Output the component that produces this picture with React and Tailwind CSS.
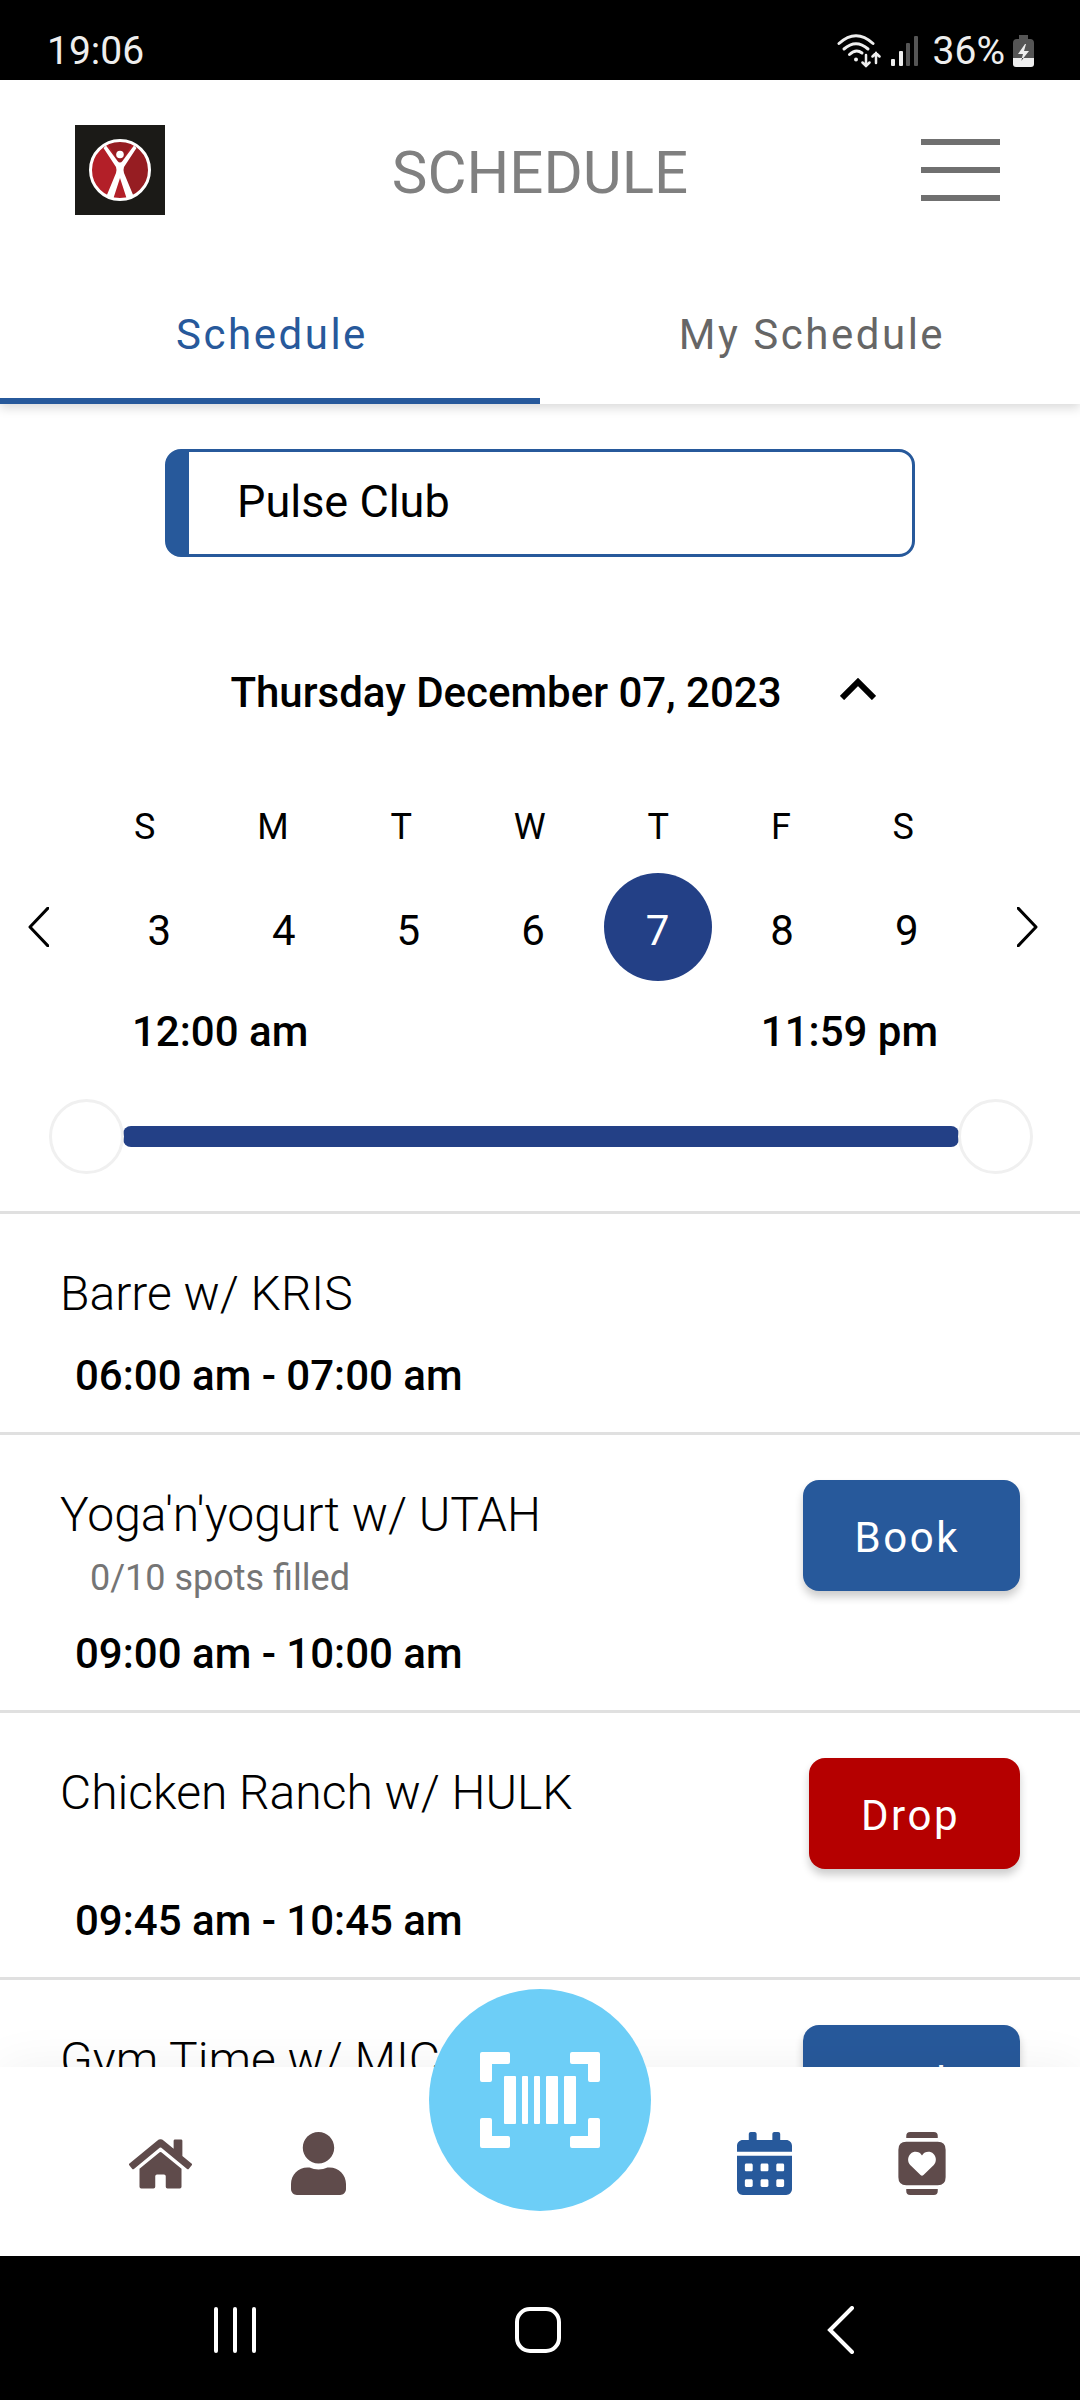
import { useState } from "react";
import { FaHome, FaUser, FaCalendarAlt } from "react-icons/fa";

const WEEKDAYS = ["S", "M", "T", "W", "T", "F", "S"];
const DAYS = [3, 4, 5, 6, 7, 8, 9];
const CLASSES = [
  { title: "Barre w/ KRIS", time: "06:00 am - 07:00 am" },
  {
    title: "Yoga'n'yogurt w/ UTAH",
    spots: "0/10 spots filled",
    time: "09:00 am - 10:00 am",
    action: "Book",
  },
  { title: "Chicken Ranch w/ HULK", time: "09:45 am - 10:45 am", action: "Drop" },
  { title: "Gym Time w/ MIC", action: "Book" },
];

function WifiIcon() {
  return (
    <svg className="h-[34px] w-[44px]" viewBox="0 0 44 34" fill="none" stroke="#eee" strokeLinecap="round" aria-hidden="true">
      <path d="M2 9.500Q19 -6 36 9.500" strokeWidth="3" />
      <path d="M7 15Q19 4.500 31 15" strokeWidth="3" />
      <path d="M12.500 20.500Q19 14.500 25 19" strokeWidth="3" />
      <circle cx="19" cy="25.500" r="2" fill="#eee" stroke="none" />
      <path d="M29 21v11M25.500 28.500l3.500 3.500l3.500 -3.500M39 29v-10M35.500 22.500l3.500 -3.500l3.500 3.500" strokeWidth="2.500" />
    </svg>
  );
}

function SignalIcon() {
  return (
    <svg className="h-[30px] w-[28px]" viewBox="0 0 28 30" aria-hidden="true">
      <rect x="0" y="23" width="4" height="7" rx="1" fill="#eee" />
      <rect x="8" y="15" width="4" height="15" rx="1" fill="#eee" />
      <rect x="15" y="7" width="4" height="23" rx="1" fill="#555" />
      <rect x="23" y="0" width="4" height="30" rx="1" fill="#555" />
    </svg>
  );
}

function BatteryIcon() {
  return (
    <svg className="h-[32px] w-[21px]" viewBox="0 0 21 32" aria-hidden="true">
      <path d="M6 0h9v4h2q4 0 4 4v15H0V8q0-4 4-4h2z" fill="#555" />
      <path d="M0 23h21v6q0 3-3 3H3q-3 0-3-3z" fill="#eee" />
      <path d="M12 9l-7 10h5l-2 7l8-10h-5l2-7z" fill="#eee" />
      <path d="M9.500 23l-1.500 3l2.500-3z" fill="#000" />
    </svg>
  );
}

function Logo() {
  return (
    <svg className="size-[90px]" viewBox="0 0 90 90" role="img" aria-label="Pulse Club">
      <rect width="90" height="90" fill="#1b1a17" />
      <circle cx="45" cy="45" r="29.500" fill="#b31f28" />
      <path d="M60 20L45 44L58 72A29.500 29.500 0 0 0 60 20z" fill="#961d22" />
      <path d="M33 19L45 40L57 19Q45 13 33 19z" fill="#961d22" />
      <circle cx="45" cy="45" r="29.500" fill="none" stroke="#fff" strokeWidth="3" />
      <path
        d="M28.500 23L31 20.500L42.500 36Q45 39 47.500 36L59 20.500L61.500 23L49 42Q48 45 49 48L58.500 71L51.500 73L45 53L38.500 73L31.500 71L41 48Q42 45 41 42z"
        fill="#fff"
      />
      <circle cx="45" cy="29.500" r="3.800" fill="#fff" />
    </svg>
  );
}

function MenuIcon() {
  return (
    <svg className="h-[62px] w-20" viewBox="0 0 80 62" stroke="#707070" strokeWidth="6" aria-hidden="true">
      <path d="M1 3h79M1 31h79M1 59h79" />
    </svg>
  );
}

function BarcodeIcon() {
  return (
    <svg className="h-24 w-[120px]" viewBox="0 0 120 96" fill="#fff" aria-hidden="true">
      <path d="M2 0h26q2 0 2 2v8q0 2-2 2H12v16q0 2-2 2H2q-2 0-2-2V2q0-2 2-2z" />
      <path d="M118 0H92q-2 0-2 2v8q0 2 2 2h16v16q0 2 2 2h8q2 0 2-2V2q0-2-2-2z" />
      <path d="M2 96h26q2 0 2-2v-8q0-2-2-2H12V68q0-2-2-2H2q-2 0-2 2v26q0 2 2 2z" />
      <path d="M118 96H92q-2 0-2-2v-8q0-2 2-2h16V68q0-2 2-2h8q2 0 2 2v26q0 2-2 2z" />
      <rect x="24" y="24" width="12" height="48" rx="1" />
      <rect x="42" y="24" width="6" height="48" rx="1" />
      <rect x="54" y="24" width="6" height="48" rx="1" />
      <rect x="66" y="24" width="12" height="48" rx="1" />
      <rect x="84" y="24" width="12" height="48" rx="1" />
    </svg>
  );
}

function WatchIcon() {
  return (
    <svg className="h-[63px] w-12" viewBox="0 0 384 512" fill="currentColor" aria-hidden="true">
      <path d="M64 48V32Q64 0 96 0h192q32 0 32 32v16zM64 464v16q0 32 32 32h192q32 0 32-32v-16z" />
      <path
        fillRule="evenodd"
        d="M64 80h256q64 0 64 64v224q0 64-64 64H64q-64 0-64-64V144q0-64 64-64zM192 190c-22-36-68-36-92-14c-28 26-26 68-4 92l84 82q12 12 24 0l84-82c22-24 24-66-4-92c-24-22-70-22-92 14z"
      />
    </svg>
  );
}

function TimeThumb({ label, value, onChange }) {
  return (
    <input
      type="range"
      min="0"
      max="1439"
      aria-label={label}
      value={value}
      onChange={(e) => onChange(Number(e.target.value))}
      className="pointer-events-none absolute inset-0 h-full w-full appearance-none bg-transparent [&::-webkit-slider-thumb]:pointer-events-auto [&::-webkit-slider-thumb]:size-[75px] [&::-webkit-slider-thumb]:appearance-none [&::-webkit-slider-thumb]:rounded-full [&::-webkit-slider-thumb]:border-[3px] [&::-webkit-slider-thumb]:border-solid [&::-webkit-slider-thumb]:border-[#f0f0f0] [&::-webkit-slider-thumb]:bg-white"
    />
  );
}

function ClassRow({ title, spots, time, action }) {
  return (
    <li className="border-t-[3px] border-[#e0e0e0] pt-[45px] pb-[26px] pr-[60px] pl-[60px]">
      <div className="flex items-start justify-between">
        <div className="pt-[5px]">
          <h2 className="text-[48px] leading-[60px] font-light">{title}</h2>
          {spots && <p className="mt-[9px] pl-[30px] text-[36px] leading-[48px] text-[#757575]">{spots}</p>}
        </div>
        {action && (
          <button
            type="button"
            className={
              action === "Drop"
                ? "h-[111px] rounded-2xl bg-[#b50000] pt-[3px] pr-[60px] pl-[52px] text-[42px] tracking-[0.06em] text-white shadow-[0_6px_8px_rgba(0,0,0,0.2)]"
                : "h-[111px] rounded-2xl bg-[#27599b] pt-[3px] pr-[60px] pl-[52px] text-[42px] tracking-[0.06em] text-white shadow-[0_6px_8px_rgba(0,0,0,0.2)]"
            }
          >
            {action}
          </button>
        )}
      </div>
      {time && <p className="mt-[22px] pl-[15px] text-[42px] leading-[60px] font-medium">{time}</p>}
    </li>
  );
}

export default function App() {
  const [tab, setTab] = useState("Schedule");
  const [day, setDay] = useState(7);
  const [from, setFrom] = useState(0);
  const [to, setTo] = useState(1439);

  return (
    <div className="flex h-screen flex-col bg-white font-[Roboto,sans-serif] text-black">
      <div className="flex h-20 shrink-0 items-center justify-between bg-black pt-[22px] pr-[46px] pl-[47px] text-[39px] text-[#eee]">
        <span>19:06</span>
        <div className="flex items-center">
          <WifiIcon />
          <span className="ml-2.5">
            <SignalIcon />
          </span>
          <span className="mr-2 ml-3.5">36%</span>
          <BatteryIcon />
        </div>
      </div>

      <header className="shrink-0 shadow-[0_4px_10px_rgba(0,0,0,0.15)]">
        <div className="flex h-[180px] items-center justify-between px-[75px]">
          <Logo />
          <h1 className="pt-1.5 text-[60px] leading-none text-[#808080]">SCHEDULE</h1>
          <button type="button" aria-label="Menu" className="flex h-[90px] w-[90px] items-center justify-center">
            <MenuIcon />
          </button>
        </div>
        <nav className="grid h-36 grid-cols-2 text-[42px] tracking-[0.06em]">
          {["Schedule", "My Schedule"].map((name) => (
            <button
              key={name}
              type="button"
              aria-pressed={tab === name}
              onClick={() => setTab(name)}
              className={
                tab === name
                  ? "border-b-[6px] border-[#27599b] pt-2.5 pl-1 text-[#27599b]"
                  : "border-b-[6px] border-transparent pt-2.5 pl-1 text-[#666]"
              }
            >
              {name}
            </button>
          ))}
        </nav>
      </header>

      <main className="min-h-0 flex-1 overflow-hidden pt-[45px]">
        <div className="px-[165px]">
          <select
            aria-label="Club"
            className="h-[108px] w-full appearance-none rounded-2xl border-[3px] border-l-[24px] border-[#27599b] bg-white pb-0.5 pl-12 text-[45px]"
          >
            <option>Pulse Club</option>
          </select>
        </div>

        <div className="mt-[106px] flex justify-center pl-[26px]">
          <button type="button" className="flex items-center gap-[58px] text-[42px] leading-[60px] font-medium">
            Thursday December 07, 2023
            <svg className="mb-2 h-[22px] w-9" viewBox="0 0 36 22" fill="none" stroke="#000" strokeWidth="6" aria-hidden="true">
              <path d="M2 20L18 4L34 20" />
            </svg>
          </button>
        </div>

        <div className="mt-20 flex justify-between pr-[166px] pl-[134px] text-[36px] leading-[48px]">
          {WEEKDAYS.map((w, i) => (
            <span key={i}>{w}</span>
          ))}
        </div>

        <div className="mt-[22px] flex items-center gap-12 pr-[42px] pl-7">
          <button type="button" aria-label="Previous week">
            <svg className="h-10 w-[21px]" viewBox="0 0 21 40" fill="none" stroke="#000" strokeWidth="3" strokeLinecap="round" strokeLinejoin="round" aria-hidden="true">
              <path d="M20 1L2 20L20 39" />
            </svg>
          </button>
          <div className="grid flex-1 grid-cols-7 justify-items-center text-[42px]">
            {DAYS.map((d) => (
              <button
                key={d}
                type="button"
                onClick={() => setDay(d)}
                className={
                  day === d
                    ? "size-[108px] rounded-full bg-[#234086] pt-1.5 text-white"
                    : "size-[108px] rounded-full pt-1.5"
                }
              >
                {d}
              </button>
            ))}
          </div>
          <button type="button" aria-label="Next week">
            <svg className="h-10 w-[21px]" viewBox="0 0 21 40" fill="none" stroke="#000" strokeWidth="3" strokeLinecap="round" strokeLinejoin="round" aria-hidden="true">
              <path d="M1 1L19 20L1 39" />
            </svg>
          </button>
        </div>

        <div className="mt-[21px] flex justify-between pr-[142px] pl-[132px] text-[42px] leading-[60px] font-medium">
          <span>12:00 am</span>
          <span>11:59 pm</span>
        </div>

        <div className="mt-[37px] mr-[47px] mb-[37px] ml-[49px]">
          <div className="relative flex h-[75px] items-center px-[74px]">
            <div className="h-[21px] flex-1 rounded-lg bg-[#234086]" />
            <TimeThumb label="Start time" value={from} onChange={setFrom} />
            <TimeThumb label="End time" value={to} onChange={setTo} />
          </div>
        </div>

        <ul>
          {CLASSES.map((c) => (
            <ClassRow key={c.title} {...c} />
          ))}
        </ul>
      </main>

      <nav className="relative flex h-[189px] shrink-0 items-center justify-between bg-white pt-1 pr-[79px] pl-[81px] text-[#5f4b4b] shadow-[0_0_48px_rgba(0,0,0,0.06)]">
        <div className="grid w-[316px] grid-cols-2 items-center justify-items-center">
          <a href="#home" aria-label="Home">
            <FaHome className="h-14 w-[63px]" />
          </a>
          <a href="#profile" aria-label="Profile">
            <FaUser className="h-[63px] w-[55px]" />
          </a>
        </div>
        <div className="grid w-[316px] grid-cols-2 items-center justify-items-center">
          <a href="#schedule" aria-label="Schedule" className="text-[#27599b]">
            <FaCalendarAlt className="h-[63px] w-[55px]" />
          </a>
          <a href="#fitness" aria-label="Fitness">
            <WatchIcon />
          </a>
        </div>
        <button
          type="button"
          aria-label="Scan barcode"
          className="absolute -top-[78px] left-1/2 flex size-[222px] -translate-x-1/2 items-center justify-center rounded-full bg-[#6dcef7]"
        >
          <BarcodeIcon />
        </button>
      </nav>

      <div className="grid h-36 shrink-0 grid-cols-3 items-center justify-items-center bg-black pt-1 pr-[88px] pl-[84px]">
        <button type="button" aria-label="Recent apps">
          <svg className="h-12 w-11" viewBox="0 0 44 48" stroke="#fff" strokeWidth="4" strokeLinecap="round" aria-hidden="true">
            <path d="M3 3v42M22 3v42M41 3v42" />
          </svg>
        </button>
        <button type="button" aria-label="Home screen">
          <svg className="size-12" viewBox="0 0 48 48" fill="none" stroke="#fff" strokeWidth="4" aria-hidden="true">
            <rect x="3" y="3" width="42" height="42" rx="13" />
          </svg>
        </button>
        <button type="button" aria-label="Back">
          <svg className="h-12 w-7" viewBox="0 0 28 48" fill="none" stroke="#fff" strokeWidth="4" strokeLinecap="round" aria-hidden="true">
            <path d="M25 2L3 24L25 46" />
          </svg>
        </button>
      </div>
    </div>
  );
}
